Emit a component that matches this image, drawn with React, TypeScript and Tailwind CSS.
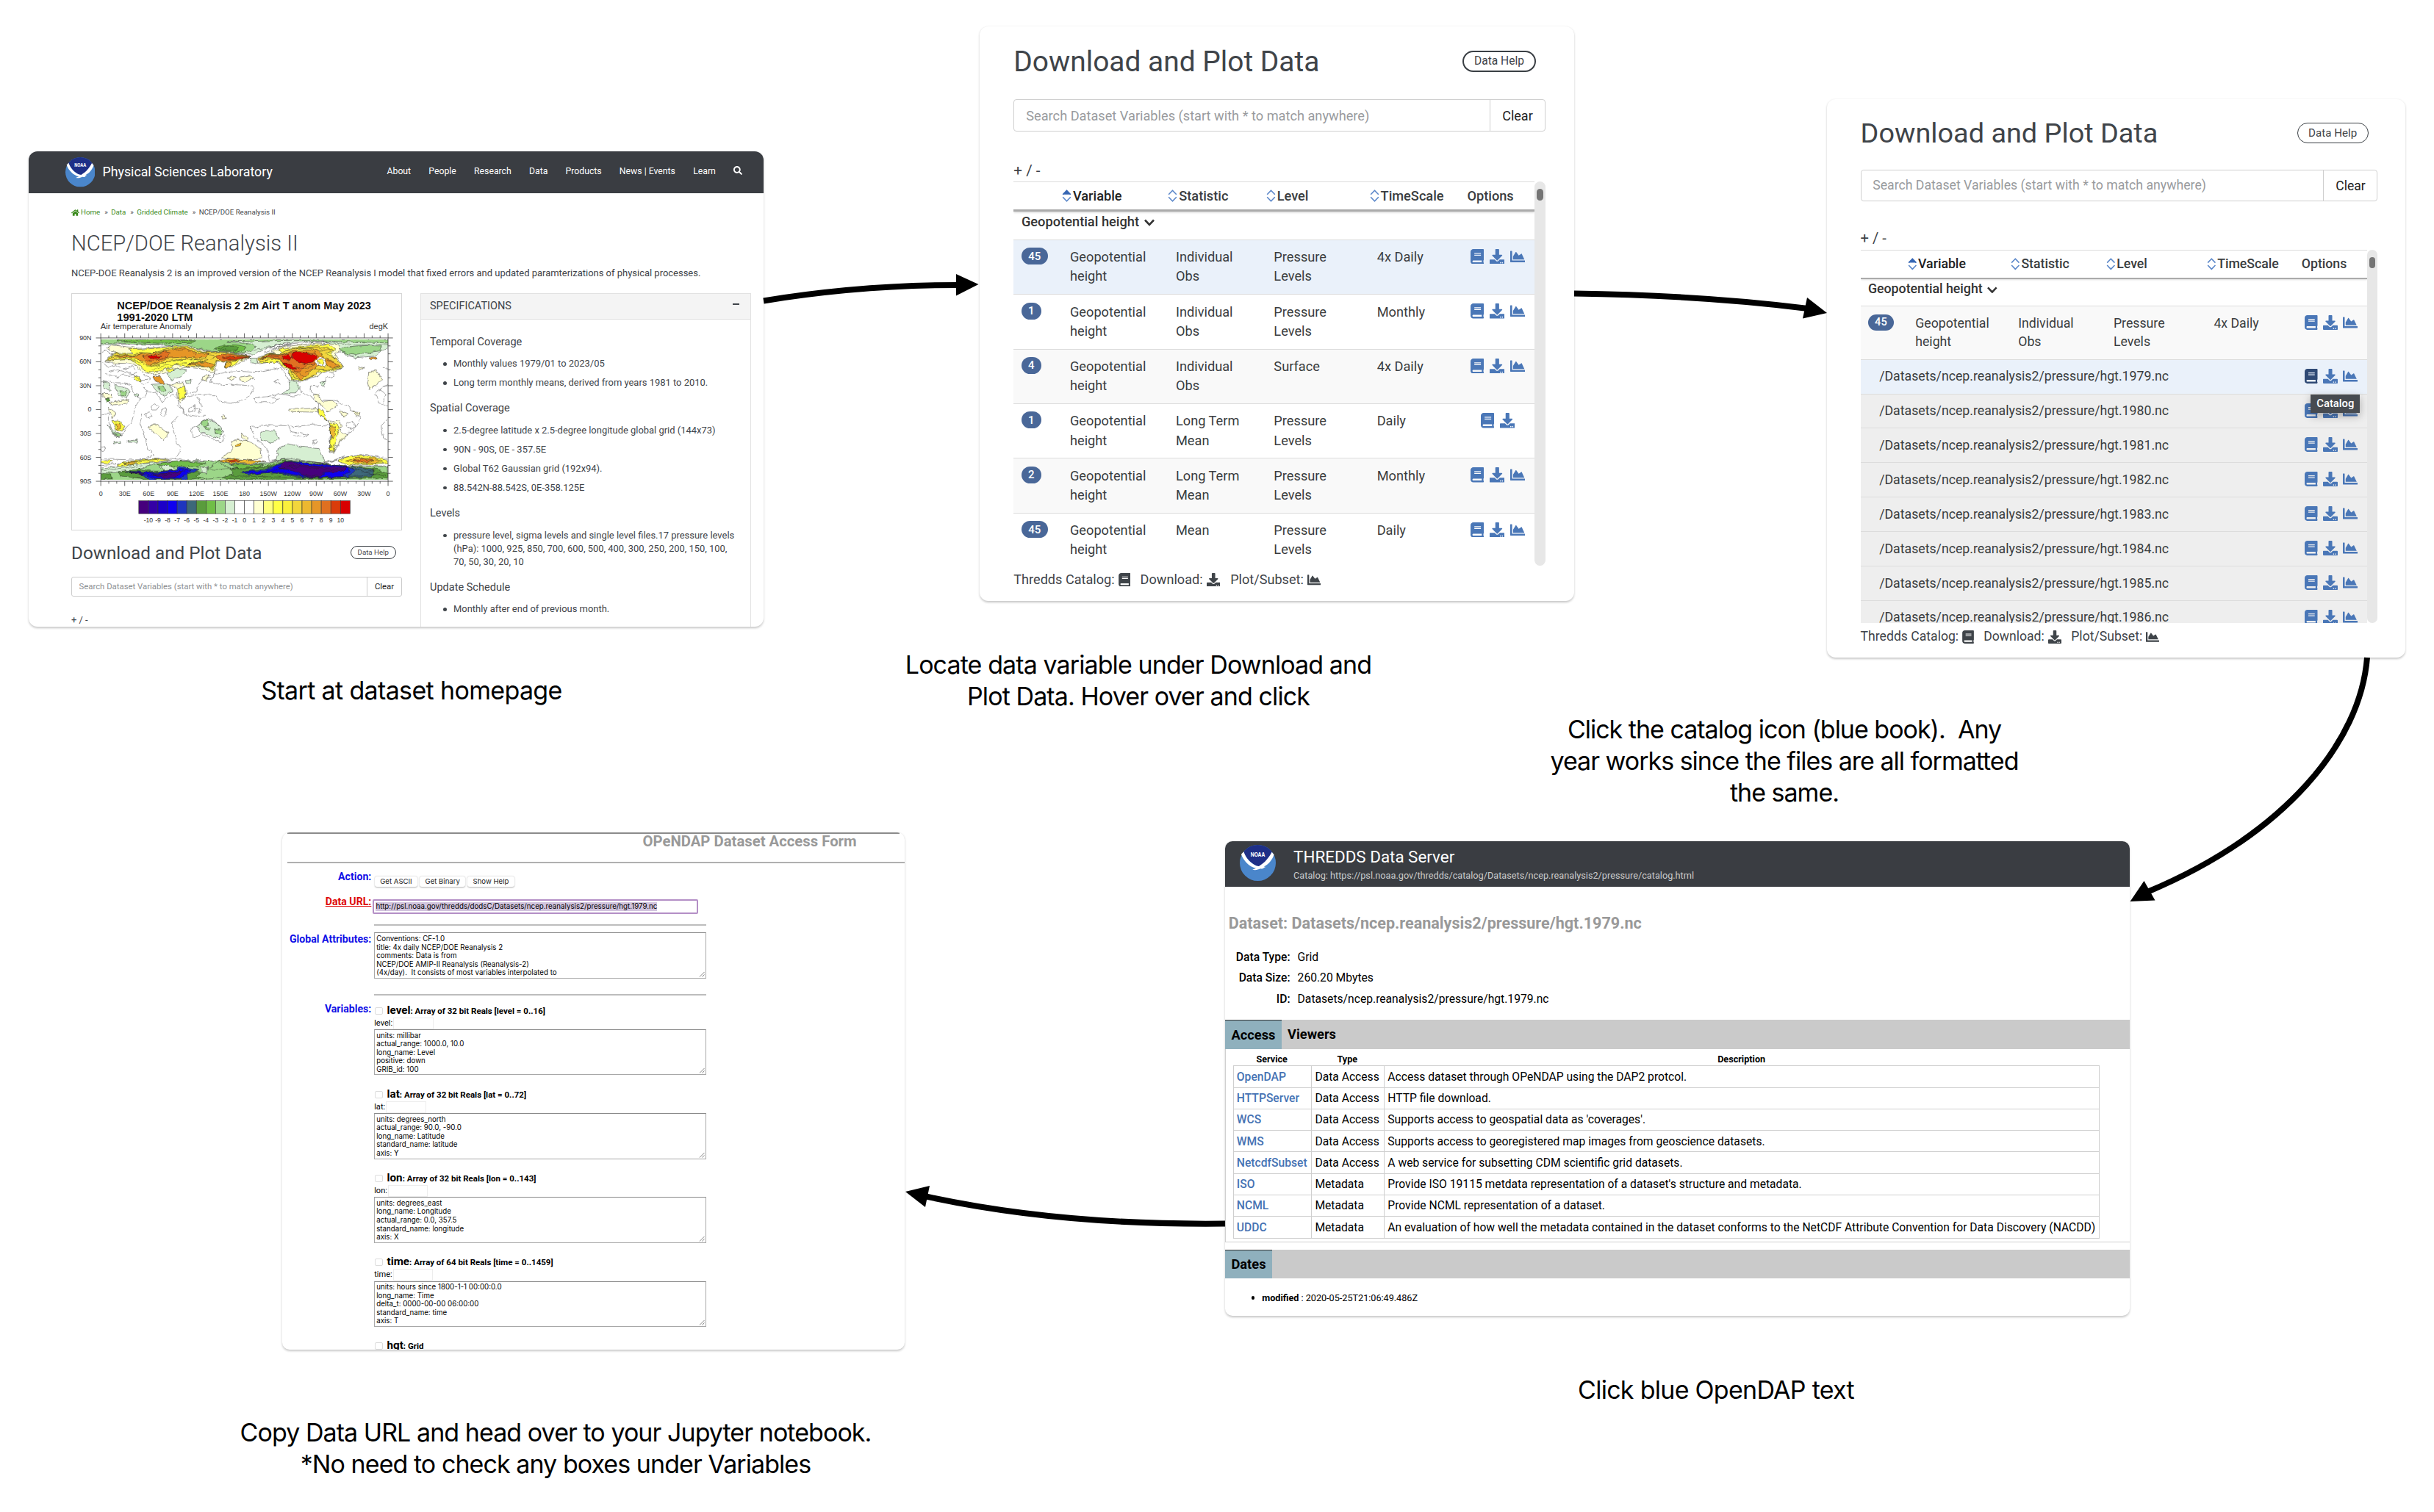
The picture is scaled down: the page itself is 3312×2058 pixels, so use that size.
import React from "react";
import { FaBook, FaDownload, FaChartArea, FaHome, FaSearch } from "react-icons/fa";

const CARD = "overflow-hidden bg-white shadow-[0_1.5px_3px_rgba(0,0,0,0.22)] font-['Roboto',sans-serif]";

function NoaaLogo({ className }: { className: string }) {
  return (
    <svg viewBox="0 0 100 100" className={className}>
      <defs>
        <clipPath id="disc">
          <circle cx="50" cy="50" r="50" />
        </clipPath>
      </defs>
      <g clipPath="url(#disc)">
        <rect width="100" height="100" fill="#4a86cb" />
        <path d="M-5 -5H105V22L90 22C82 40 68 55 52 60C36 55 20 40 10 22L-5 22Z" fill="#1e2f87" />
      </g>
      <path
        d="M4 26L11 19C17 37 30 52 46 58L53 59C70 50 80 36 89 20L95 27C90 42 80 54 67 60L72 61L66 64C68 66 62 67 57 66C51 69 44 71 35 69L45 65C26 61 10 43 4 26Z"
        fill="#ffffff"
      />
      <text x="50" y="32" textAnchor="middle" fontSize="16" fontWeight="700" textLength="40" lengthAdjust="spacingAndGlyphs" fill="#ffffff" fontFamily="Inter, sans-serif">
        NOAA
      </text>
    </svg>
  );
}

const SCALE_COLORS = [
  "#46007d", "#3400a6", "#1c00c8", "#0f00f0", "#1f35c0", "#3d687a", "#5a9c3c", "#70be46", "#9cd688", "#d6efd2", "#ffffff",
  "#ffffff", "#ffffd2", "#ffff80", "#ffff46", "#faf03c", "#f2d63c", "#ecb830", "#e69628", "#e07020", "#da3c0a", "#d80000",
];
const LAT = ["90N", "60N", "30N", "0", "30S", "60S", "90S"];
const LON = ["0", "30E", "60E", "90E", "120E", "150E", "180", "150W", "120W", "90W", "60W", "30W", "0"];

// Filled temperature bands, from bottom layer to top: [colour, outline]
const BANDS: [string, string][] = [
  // Arctic
  ["#d6efd2", "M169 214H1349V250L1322 262L1290 284L1216 290L1180 280L1140 248L1100 226L960 226L880 240L830 262L800 276L760 274L600 262L560 246L420 238L300 234L169 236Z"],
  ["#9cd688", "M169 214H1349V230L1180 224L950 219L860 221C800 226 690 220 690 224L790 234C822 250 780 270 740 270L625 264C590 250 480 244 420 237L300 232L169 229Z"],
  ["#70be46", "M235 215L430 216L560 221L540 228L400 231L300 225L235 221Z"],
  ["#70be46", "M632 254C670 234 730 232 765 246C756 268 705 272 682 265Z"],
  ["#5a9c3c", "M655 252C690 238 715 241 735 249C722 264 695 266 680 261Z"],
  ["#9cd688", "M1150 254Q1200 236 1322 242L1318 262Q1280 266 1262 272L1216 280Q1180 276 1154 264Z"],
  // Eurasia
  ["#ffffd2", "M186 308C196 286 210 276 232 270L196 250L212 238L250 242L330 252L420 246L520 238L600 264L700 266L786 286L760 302L700 332L680 328L690 304L645 308L636 350L620 352L596 336L520 330L465 340L430 352L400 360L350 352L330 340L318 324L300 315L215 312Z"],
  ["#ffff46", "M190 304C202 286 218 278 236 272L300 272L286 256L330 256L420 250L520 242L590 267L690 268L784 286L745 300L704 324L682 328L690 303L642 307L628 344L604 326L520 324L470 318L450 330L400 350L350 346L330 322L290 298L215 302Z"],
  ["#f2d63c", "M194 302L234 274L296 278L330 268L380 272L440 256L520 246L584 268L690 270L782 286L730 300L700 310L640 304L626 336L600 320L560 326L522 324L530 314L590 306L560 298L500 298L460 302L420 312L370 326L340 320L330 300L300 290L240 292L205 306Z"],
  ["#e69628", "M225 286L270 280L300 284L330 276L400 270L450 260L510 250L566 270L610 274L600 290L545 290L500 288L440 292L400 312L366 322L345 306L300 292Z"],
  ["#e07020", "M340 284L405 276L425 264L454 270L444 288L410 296L384 304L356 300Z"],
  ["#d80000", "M362 290L376 280L402 284L420 284L400 293L376 294Z"],
  ["#e07020", "M640 284L690 274L782 287L735 300L680 304L652 298Z"],
  ["#da3c0a", "M668 288L720 286L770 288L730 297L690 298Z"],
  ["#e69628", "M524 316L600 308L634 318L620 334L590 322Z"],
  ["#ecb830", "M684 310L704 306L700 330L682 330Z"],
  ["#d6efd2", "M784 292L812 292L812 318L790 310Z"],
  // North America
  ["#ffffd2", "M808 294L850 272L890 276L870 262L930 244L1060 230L1145 236L1150 262L1130 272L1140 290L1168 330L1120 350L1080 346L1062 364L1030 374L1000 388L952 384L940 348L905 318L880 306L815 316Z"],
  ["#ffff46", "M812 298L850 273L920 274L900 258L1000 244L1100 234L1126 250L1130 262L1110 272L1138 296L1164 332L1120 342L1060 350L1040 366L998 386L950 378L942 340L900 310L822 310Z"],
  ["#f2d63c", "M814 296L850 275L900 276L950 254L1060 244L1100 250L1124 262L1092 272L1136 292L1162 328L1110 340L1070 338L1050 360L1000 384L960 372L944 336L905 302L880 296L820 306Z"],
  ["#e69628", "M822 296L866 276L915 276L960 262L1040 258L1080 270L1084 290L1060 300L1070 318L1040 340L1016 362L990 382L968 358L945 338L906 296L860 290Z"],
  ["#e69628", "M1092 292L1120 306L1150 326L1120 334L1098 322Z"],
  ["#e07020", "M830 288L866 278L905 280L945 270L1050 270L1066 290L1050 316L1010 324L990 346L965 344L945 330L920 312L900 294Z"],
  ["#d80000", "M958 272L985 264L1058 282L1040 308L1010 314L975 306L954 292Z"],
  ["#d80000", "M914 286L936 276L950 290L940 302L920 296ZM922 312L950 314L970 336L945 338Z"],
  ["#ffffff", "M1048 306L1070 284L1090 298L1096 316L1086 330L1066 322Z"],
  ["#ffff46", "M1058 304L1076 294L1086 312L1076 320Z"],
  // Mid latitudes and tropics
  ["#e69628", "M386 366L412 368L442 408L420 402L396 386Z"],
  ["#e69628", "M1272 288L1300 288L1304 296L1284 298Z"],
  ["#ffff46", "M304 362L326 366L332 386L306 382ZM440 336L466 332L470 344L450 350Z"],
  ["#d6efd2", "M376 400L440 396L466 424L430 448L400 430Z"],
  ["#9cd688", "M398 408L432 406L440 426L416 432Z"],
  ["#d6efd2", "M226 404L262 408L290 432L272 456L240 446ZM176 384L206 396L208 426L186 416Z"],
  ["#9cd688", "M244 426L276 428L270 448L252 446Z"],
  ["#d6efd2", "M440 356L490 334L522 340L500 368L460 382ZM516 384L540 382L538 396L520 396ZM306 436L320 440L322 456L308 450Z"],
  ["#ffffd2", "M450 404L505 390L520 430L500 476L484 460L480 416Z"],
  ["#ffff46", "M484 418L514 406L514 450L492 464Z"],
  ["#ffffd2", "M204 474L284 462L276 478L220 484ZM200 494L228 514L216 542L206 520ZM172 440L216 440L214 458L190 460Z"],
  ["#5a9c3c", "M190 458L206 458L206 470L192 470Z"],
  ["#ffffd2", "M738 370L780 362L798 376L762 388L740 382ZM688 374L708 366L722 374L704 384ZM1228 326L1250 332L1230 342ZM586 370L616 360L606 384L586 384Z"],
  ["#ffffd2", "M1270 350L1304 346L1324 380L1300 404L1270 418L1264 386Z"],
  ["#d6efd2", "M942 380L976 392L988 412L966 438L912 438L944 418Z"],
  ["#d6efd2", "M1066 392L1094 384L1084 408Z"],
  ["#ffffd2", "M940 502L1050 498L1066 508L1044 514L950 512Z"],
  ["#ffffd2", "M1040 444L1062 440L1080 470L1120 466L1142 484L1104 514L1080 488L1056 472Z"],
  ["#ffff46", "M1062 496L1082 504L1098 550L1084 540L1064 520Z"],
  ["#ffffd2", "M1104 552L1150 546L1156 596L1180 606L1140 650L1126 684L1104 678L1114 620L1108 570Z"],
  ["#ffff46", "M1106 560L1130 556L1148 580L1134 630L1128 676L1110 670L1116 610Z"],
  ["#ecb830", "M1114 570L1132 572L1136 592L1120 620L1112 600Z"],
  ["#ffffd2", "M1150 508L1186 520L1172 532L1154 524ZM1202 512L1234 516L1228 536L1210 520Z"],
  ["#ffff46", "M214 552L240 550L268 572L256 592L232 584Z"],
  ["#ecb830", "M226 560L242 560L252 580L238 582Z"],
  ["#d6efd2", "M198 566L214 582L256 606L242 618L220 604Z"],
  ["#9cd688", "M222 598L246 604L244 614L230 610Z"],
  ["#d6efd2", "M220 638L250 634L250 642L222 644ZM280 634L322 626L318 638L282 638Z"],
  ["#ffffd2", "M362 574L400 564L446 600L430 630L396 606Z"],
  ["#d6efd2", "M566 570L602 542L650 562L672 596L656 622L614 606L580 598Z"],
  ["#9cd688", "M580 556L606 544L616 566L590 572ZM634 580L662 588L664 606L642 602ZM596 574L620 578L612 590L598 586Z"],
  ["#d6efd2", "M826 600L850 586L886 594L902 620L868 642L828 630Z"],
  ["#ffffd2", "M704 640L732 622L746 632L780 634L826 664L830 700L790 712L700 704L664 700L710 670Z"],
  ["#ffffd2", "M746 600L774 622L768 634L752 620ZM664 532L680 528L682 540L668 542Z"],
  ["#ecb830", "M720 650L744 640L738 656L722 658Z"],
  ["#d6efd2", "M888 712L902 660L938 644L990 656L1066 664L1090 716L1060 724L940 718Z"],
  ["#ffff46", "M1104 660L1122 654L1130 672L1112 676Z"],
  // Antarctica
  ["#d6efd2", "M169 744L260 734L440 716L560 712L660 718L860 722L900 708L1080 722L1140 734L1349 735V796H169Z"],
  ["#9cd688", "M169 762L300 764L360 734L430 720L560 716L640 714L700 728L850 726L920 708L1060 722L1110 730L1240 738L1349 738V796H169Z"],
  ["#5a9c3c", "M240 758L330 748L380 756L450 756L520 744L600 766L700 746L760 736L840 738L920 714L1120 732L1240 742L1310 748L1349 770V784L1000 790L700 788L640 782L520 794L360 790L250 776Z"],
  ["#70be46", "M400 726L480 714L600 722L560 738L440 736ZM700 730L840 730L800 744L740 744Z"],
  ["#9cd688", "M560 776L600 750L650 720L700 744L716 770L660 784L600 790Z"],
  ["#d6efd2", "M410 738L450 730L480 750L430 754ZM580 740L610 738L604 764L586 758Z"],
  ["#5a9c3c", "M169 766L210 768L214 788L169 792Z"],
  ["#3d687a", "M850 744L940 714L1090 732L1200 738L1290 752L1284 780L1000 784L880 762Z"],
  ["#1f35c0", "M270 756L400 760L470 752L494 740L570 752L524 768L526 790L370 790L340 772Z"],
  ["#0f00f0", "M290 760L400 763L480 752L500 748L540 754L516 768L500 788L390 788L350 772Z"],
  ["#46007d", "M380 768L420 766L500 758L480 780L440 786L400 778ZM290 762L350 766L340 770Z"],
  ["#1f35c0", "M740 762L800 752L850 750L900 726L960 714L1060 728L1180 736L1220 752L1180 782L1010 782L920 766L840 764L780 774Z"],
  ["#0f00f0", "M756 762L800 756L850 756L904 728L960 716L1060 730L1180 736L1190 760L1160 780L1010 780L920 762L840 762L790 770Z"],
  ["#46007d", "M900 744L920 720L960 718L1010 732L1080 738L1182 738L1164 756L1090 764L1060 782L1010 778L970 758Z"],
  ["#ffff46", "M169 716L200 711L220 718L190 726L169 724Z"],
  ["#ffff46", "M236 732L270 718L380 706L456 710L380 720L310 728L250 738Z"],
  ["#ecb830", "M262 726L300 716L320 720L290 730ZM654 716L690 704L760 710L848 718L790 724L700 726Z"],
  ["#da3c0a", "M680 714L720 710L744 716L710 722Z"],
  ["#ffff46", "M1140 716L1176 698L1250 692L1349 712V722L1260 730L1190 730Z"],
  ["#ecb830", "M1176 714L1220 702L1290 704L1330 718L1260 724L1210 724Z"],
  ["#e07020", "M1204 714L1240 706L1290 712L1260 720Z"],
];

// Coastlines and unfilled contours
const LINES: string[] = [
  "M169 390L200 384L230 396L260 396L290 400L300 420L312 444L330 462L352 448L362 428L340 412",
  "M360 425L380 432L400 440L424 474L436 460L466 440L484 460L500 500L516 524L560 530L600 530",
  "M330 462L310 492L300 520L300 552L270 580L256 612L226 614L212 580L200 540L200 520L169 526",
  "M480 484L500 500L520 522M530 500L556 486L556 510L530 514ZM560 452L576 460L570 480L584 486M560 500L580 500L572 520",
  "M540 578L566 570M540 578L546 618L580 606L620 618L660 640L680 610L672 590L640 556L610 540L600 548",
  "M516 440L560 430L570 400L604 376L632 366L640 340",
  "M486 530L460 560L470 600L480 640L500 664L480 700M340 520L330 560L350 610L360 660L390 690L360 702",
  "M520 450L570 440L640 444L660 470L720 476L780 450L800 412L770 404L700 400L660 402L620 390L630 360L690 350L740 346L800 350L880 336L908 330L940 380",
  "M800 456L850 450L900 458L880 474L806 474ZM850 450L910 440L960 448L990 440M908 400L880 392L900 380",
  "M784 576L860 568L940 570L950 594L1020 606L1004 616L960 610M952 574L1040 566L1110 568M784 576L800 620L850 660L862 716",
  "M1030 406L1060 408L1074 400L1100 372L1130 366L1120 352M1030 406L1030 430L1060 444L1080 464L1130 466L1180 486L1200 510L1236 526L1230 560L1190 600L1160 620L1130 680L1108 676L1112 600L1104 556L1060 516L1064 480L1044 462L990 424L952 370",
  "M1350 540L1320 570L1330 620L1350 630M1349 400L1322 410L1296 440L1310 476L1349 486M1310 416L1340 440L1330 470M1330 330L1349 340",
  "M376 490L390 480L408 490L400 502L382 502ZM350 524L366 516L380 530L360 538ZM412 512L430 498L440 504L430 530L416 526Z",
  "M1040 630L1056 628L1064 638L1052 646L1040 640ZM1176 560L1200 552L1216 572L1196 582L1180 574Z",
  "M169 656L184 658L188 668L178 676L169 672Z",
  "M169 270L190 262L220 276L200 290M240 350L260 336L300 326L310 340M200 350L240 340L300 356L330 380L360 380M190 356L240 372L260 360L300 372M176 310L200 330L230 320L250 330M270 340L290 360L320 350M340 360L370 372L366 390L340 400L320 380",
  "M900 250L960 232L1040 224L1140 228L1220 238L1349 236M800 260L880 240L940 226M860 254L950 234M840 268L900 246L960 228",
  "M169 706L300 710L460 704L520 712M169 734L240 726L400 708M169 752L260 744L340 734M860 716L940 704L1080 724L1160 700L1260 688L1349 706M1080 732L1140 708M1060 728L1130 714L1170 694",
  "M460 770L380 776L330 764M860 760L940 738L1040 744L1160 750M900 750L960 730L1080 742M980 770L1060 776",
  "M300 760L420 768L520 754M560 740L640 750L720 744L860 740M700 776L820 778L1000 784L1240 776L1330 760M1200 744L1260 760L1300 752M1240 760L1340 776",
  "M200 300L240 280L300 284L340 276M240 296L300 300L330 312M360 330L400 322L440 308L500 300M380 340L430 324L520 310M480 262L520 256L560 276M600 276L640 282L620 300M540 300L600 296L610 302L560 308",
  "M820 300L860 284L900 286L940 306M950 350L980 352L1010 366M970 330L1010 336L1040 326M1000 256L1060 250L1090 260M1060 262L1110 256M930 262L980 252L1040 248M1100 300L1130 316L1140 330M1010 350L1050 336L1100 340",
];

function AnomalyMap() {
  const x0 = 169, x1 = 1349, y0 = 209, y1 = 798;
  return (
    <svg viewBox="52 28 1350 969" className="h-[323px] w-[450px] shrink-0 border border-[#d6d6d6] bg-white" fontFamily="'Liberation Sans', Arial, sans-serif">
      <defs>
        <clipPath id="plot">
          <rect x={x0} y={y0 + 6} width={x1 - x0} height={y1 - y0 - 12} />
        </clipPath>
        <filter id="contour" filterUnits="userSpaceOnUse" x="150" y="190" width="1220" height="620">
          <feTurbulence type="fractalNoise" baseFrequency="0.045" numOctaves="3" seed="4" />
          <feDisplacementMap in="SourceGraphic" scale="16" xChannelSelector="R" yChannelSelector="G" />
        </filter>
      </defs>
      <g fill="#111">
        <text x="236" y="91" fontSize="43" fontWeight="700" textLength="1043" lengthAdjust="spacingAndGlyphs">NCEP/DOE Reanalysis 2 2m Airt T anom May 2023</text>
        <text x="236" y="140" fontSize="43" fontWeight="700" textLength="311" lengthAdjust="spacingAndGlyphs">1991-2020 LTM</text>
      </g>
      <g fill="#333" fontSize="33">
        <text x="168" y="172" textLength="374" lengthAdjust="spacingAndGlyphs">Air temperature Anomaly</text>
        <text x="1349" y="172" textAnchor="end">degK</text>
      </g>
      <g clipPath="url(#plot)">
        <g filter="url(#contour)" strokeLinejoin="round">
          {BANDS.map(([fill, d], i) => (
            <path key={i} d={d} fill={fill} stroke="#222" strokeOpacity="0.75" strokeWidth="1.9" />
          ))}
          {LINES.map((d, i) => (
            <path key={i} d={d} fill="none" stroke="#222" strokeOpacity="0.65" strokeWidth="1.9" />
          ))}
        </g>
      </g>
      <g stroke="#444" strokeWidth="2.5" fill="none">
        <rect x={x0} y={y0} width={x1 - x0} height={y1 - y0} />
        {Array.from({ length: 37 }, (_, i) => {
          const x = x0 + (i * (x1 - x0)) / 36;
          const l = i % 3 === 0 ? 19 : 10;
          return <path key={i} d={`M${x} ${y0}v${-l}M${x} ${y1}v${l}`} />;
        })}
        {Array.from({ length: 19 }, (_, i) => {
          const y = y0 + (i * (y1 - y0)) / 18;
          const l = i % 3 === 0 ? 20 : 10;
          return <path key={i} d={`M${x0} ${y}h${-l}M${x1} ${y}h${l}`} />;
        })}
      </g>
      <g fill="#333" fontSize="27">
        {LAT.map((t, i) => (
          <text key={t} x="131" y={y0 + (i * (y1 - y0)) / 6 + 9} textAnchor="end">{t}</text>
        ))}
        {LON.map((t, i) => (
          <text key={i} x={x0 + (i * (x1 - x0)) / 12} y="858" textAnchor="middle">{t}</text>
        ))}
      </g>
      {SCALE_COLORS.map((c, i) => (
        <rect key={i} x={325 + i * 39.45} y="878" width="39.45" height="53" fill={c} stroke="#333" strokeWidth="1.8" />
      ))}
      <g fill="#333" fontSize="26">
        {Array.from({ length: 21 }, (_, i) => (
          <text key={i} x={364.5 + i * 39.45} y="966" textAnchor="middle">{i - 10}</text>
        ))}
      </g>
    </svg>
  );
}

const SPECS: { title: string; items: string[][] }[] = [
  { title: "Temporal Coverage", items: [["Monthly values 1979/01 to 2023/05"], ["Long term monthly means, derived from years 1981 to 2010."]] },
  {
    title: "Spatial Coverage",
    items: [["2.5-degree latitude x 2.5-degree longitude global grid (144x73)"], ["90N - 90S, 0E - 357.5E"], ["Global T62 Gaussian grid (192x94)."], ["88.542N-88.542S, 0E-358.125E"]],
  },
  {
    title: "Levels",
    items: [["pressure level, sigma levels and single level files.17 pressure levels", "(hPa): 1000, 925, 850, 700, 600, 500, 400, 300, 250, 200, 150, 100,", "70, 50, 30, 20, 10"]],
  },
  { title: "Update Schedule", items: [["Monthly after end of previous month."]] },
];

function HomepageCard() {
  return (
    <section className={`${CARD} absolute left-[39px] top-[206px] h-[646.5px] w-[1000px] rounded-[12px] text-[#3f4449]`}>
      <header className="flex h-[57px] items-center bg-[#3a3d42] pl-[49.5px] pr-[29px] text-white">
        <NoaaLogo className="size-[40.5px]" />
        <span className="ml-[10.5px] whitespace-nowrap text-[17.78px]">Physical Sciences Laboratory</span>
        <nav className="ml-auto flex items-center gap-[24.2px] whitespace-nowrap pb-[2px] text-[12.25px]">
          {["About", "People", "Research", "Data", "Products", "News | Events", "Learn"].map((t) => (
            <span key={t}>{t}</span>
          ))}
          <FaSearch className="mb-[3px] size-[12px]" />
        </nav>
      </header>
      <div className="pl-[58px] pr-[17px]">
        <div className="mt-[19.4px] flex h-[14px] items-center whitespace-nowrap text-[9.71px] text-[#3b8a1d]">
          <FaHome className="mr-[2px] size-[11px]" />
          <span>Home</span>
          <span className="ml-[6px] mr-[4.5px] text-[#3f4449]">»</span>
          <span>Data</span>
          <span className="ml-[6px] mr-[4.5px] text-[#3f4449]">»</span>
          <span>Gridded Climate</span>
          <span className="ml-[6px] mr-[4.5px] text-[#3f4449]">»</span>
          <span className="text-[#3f4449]">NCEP/DOE Reanalysis II</span>
        </div>
        <h1 className="mt-[16.4px] text-[29.2px] font-light leading-[36px]">NCEP/DOE Reanalysis II</h1>
        <p className="mt-[13.8px] whitespace-nowrap text-[12.97px] leading-[18px]">
          NCEP-DOE Reanalysis 2 is an improved version of the NCEP Reanalysis I model that fixed errors and updated paramterizations of physical processes.
        </p>
        <div className="mt-[18.7px] flex gap-[25px]">
          <div className="flex w-[450px] flex-col">
            <AnomalyMap />
            <div className="mt-[16.2px] flex h-[30px] items-center justify-between pr-[8px]">
              <h2 className="whitespace-nowrap text-[24.25px]">Download and Plot Data</h2>
              <span className="mb-[3px] flex h-[18px] w-[62.5px] items-center justify-center rounded-full border-[1.5px] border-[#3a3f44] text-[9.73px]">Data Help</span>
            </div>
            <div className="mt-[16.5px] flex h-[27px] rounded-[3px] border border-[#ccc]">
              <span className="flex flex-1 items-center pl-[9.5px] text-[11.35px] text-[#8e9194]">Search Dataset Variables (start with * to match anywhere)</span>
              <span className="flex w-[47px] items-center justify-center border-l border-[#ccc] text-[11.35px] text-[#222]">Clear</span>
            </div>
            <div className="mt-[24.5px] text-[12.96px] leading-[16px]">+ / -</div>
          </div>
          <div className="h-[470px] w-[450px] border border-[#e2e2e2]">
            <div className="flex h-[35px] items-center justify-between border-b border-[#e0e0e0] bg-[#f4f4f4] pl-[12px] pr-[15px] text-[14.52px]">
              <span>SPECIFICATIONS</span>
              <span className="mb-[6px] h-[2px] w-[9px] bg-[#3f4449]" />
            </div>
            <div className="flex flex-col gap-[16px] pl-[12px] pt-[20.5px]">
              {SPECS.map((s) => (
                <div key={s.title}>
                  <h3 className="text-[14.54px] leading-[20px]">{s.title}</h3>
                  <ul className="mt-[10.6px] flex flex-col gap-[8px] text-[12.95px] leading-[18px]">
                    {s.items.map((lines) => (
                      <li key={lines[0]} className="flex pl-[18px]">
                        <span className="mr-[9.5px] mt-[7px] size-[4.5px] shrink-0 rounded-full bg-[#3f4449]" />
                        <span className="whitespace-nowrap">
                          {lines.map((l) => (
                            <span key={l} className="block">{l}</span>
                          ))}
                        </span>
                      </li>
                    ))}
                  </ul>
                </div>
              ))}
            </div>
          </div>
        </div>
      </div>
    </section>
  );
}

function SortIcon({ active }: { active?: boolean }) {
  return (
    <svg viewBox="0 0 13 17" className="mr-[2px] h-[17px] w-[13px] shrink-0" fill="none" stroke="#5b87c9" strokeWidth="1.6" strokeLinejoin="round">
      <path d="M1.2 6.8L6.5 1.2L11.8 6.8" fill={active ? "#3767b4" : "none"} stroke={active ? "#3767b4" : "#5b87c9"} />
      <path d="M1.2 10.2L6.5 15.8L11.8 10.2" />
    </svg>
  );
}

function RowIcons({ dark, chart = true }: { dark?: boolean; chart?: boolean }) {
  return (
    <span className="flex w-[100px] justify-center gap-[7.5px] text-[#4a77b7]">
      <FaBook className={dark ? "h-[20.6px] w-[18px] text-[#2f4a75]" : "h-[20.6px] w-[18px]"} />
      <FaDownload className="size-[20.6px]" />
      {chart && <FaChartArea className="size-[20.6px]" />}
    </span>
  );
}

type Row = { n: string; stat: string[]; level: string[]; time: string; tone: string; chart?: boolean };

function VariableRow({ row }: { row: Row }) {
  return (
    <div className={`flex h-[74.4px] shrink-0 border-b-[1.5px] border-[#dcdcdc] pl-[10.6px] pt-[10.5px] text-[18.22px] leading-[26.2px] text-[#3a3d40] ${row.tone}`}>
      <span className="w-[66.1px]">
        <span className={`flex h-[23px] items-center justify-center rounded-full bg-[#496798] text-[15px] font-medium text-white ${row.n.length > 1 ? "w-[36px]" : "w-[27px]"}`}>{row.n}</span>
      </span>
      <span className="w-[144px]">Geopotential<br />height</span>
      <span className="w-[133.4px]">{row.stat[0]}<br />{row.stat[1]}</span>
      <span className="w-[140.3px]">{row.level[0]}<br />{row.level[1]}</span>
      <span className="w-[114.5px]">{row.time}</span>
      <span className="pt-[1.5px]"><RowIcons chart={row.chart !== false} /></span>
    </div>
  );
}

function DataPanel({ className, children }: { className: string; children: React.ReactNode }) {
  return (
    <section className={`${CARD} h-[781.7px] w-[809.3px] rounded-[12px] pl-[46.6px] pr-[39px] pt-[27.5px] text-[#3f4449] ${className}`}>
      <div className="flex h-[44px] items-center justify-between pr-[13px]">
        <h2 className="mb-[2px] whitespace-nowrap text-[38.9px]">Download and Plot Data</h2>
        <span className="mb-[4px] flex h-[28.5px] w-[100px] items-center justify-center rounded-full border-[2px] border-[#3a3f44] text-[15.57px]">Data Help</span>
      </div>
      <div className="mt-[27.8px] flex h-[44px] rounded-[4px] border-[1.5px] border-[#cfcfcf]">
        <span className="flex flex-1 items-center whitespace-nowrap pl-[16px] text-[18.19px] text-[#999b9e]">Search Dataset Variables (start with * to match anywhere)</span>
        <span className="flex w-[75px] items-center justify-center border-l-[1.5px] border-[#cfcfcf] text-[18px] text-[#222]">Clear</span>
      </div>
      <div className="mt-[40.6px] text-[20.7px] leading-[24px]">+ / -</div>
      <div className="mt-[3.4px] flex h-[522.3px]">
        <div className="flex w-[709px] flex-col overflow-hidden">
          <div className="z-10 flex h-[41px] shrink-0 items-center whitespace-nowrap border-b-[3px] border-t-[1.5px] border-b-[#ababab] border-t-[#dcdcdc] bg-white pl-[65.7px] text-[18.2px] font-medium text-[#3a3d40] shadow-[0_1px_3px_rgba(0,0,0,0.2)]">
            <span className="flex w-[144.3px] items-center text-[#222]"><SortIcon active />Variable</span>
            <span className="flex w-[133.5px] items-center"><SortIcon />Statistic</span>
            <span className="flex w-[140.8px] items-center"><SortIcon />Level</span>
            <span className="flex w-[132.9px] items-center"><SortIcon />TimeScale</span>
            <span>Options</span>
          </div>
          <div className="flex h-[38.5px] shrink-0 items-start border-b-[1.5px] border-[#dcdcdc] pl-[10.6px] pt-[1px] text-[18.28px] font-medium leading-[26px] text-[#333]">
            Geopotential height
            <svg viewBox="0 0 14 10" className="ml-[6.5px] mt-[9px] h-[10px] w-[14px]" fill="none" stroke="#333" strokeWidth="2.6">
              <path d="M1 1.5L7 7.8L13 1.5" />
            </svg>
          </div>
          {children}
        </div>
        <div className="w-[14.5px] rounded-full bg-[#e7e7e7] pl-[2.5px] pt-[10px]">
          <div className="h-[16px] w-[9px] rounded-full bg-[#757575]" />
        </div>
      </div>
      <div className="mt-[7.5px] flex items-center whitespace-nowrap text-[18.12px] leading-[24px]">
        Thredds Catalog:<FaBook className="ml-[5px] h-[18.5px] w-[16.5px]" />
        <span className="ml-[13.5px]">Download:</span><FaDownload className="ml-[5px] size-[18.5px]" />
        <span className="ml-[14px]">Plot/Subset:</span><FaChartArea className="ml-[5px] size-[18.5px]" />
      </div>
    </section>
  );
}

const ROWS: Row[] = [
  { n: "45", stat: ["Individual", "Obs"], level: ["Pressure", "Levels"], time: "4x Daily", tone: "bg-[#eaf1fa]" },
  { n: "1", stat: ["Individual", "Obs"], level: ["Pressure", "Levels"], time: "Monthly", tone: "bg-white" },
  { n: "4", stat: ["Individual", "Obs"], level: ["Surface", ""], time: "4x Daily", tone: "bg-[#f9f9f9]" },
  { n: "1", stat: ["Long Term", "Mean"], level: ["Pressure", "Levels"], time: "Daily", tone: "bg-white", chart: false },
  { n: "2", stat: ["Long Term", "Mean"], level: ["Pressure", "Levels"], time: "Monthly", tone: "bg-[#f9f9f9]" },
  { n: "45", stat: ["Mean", ""], level: ["Pressure", "Levels"], time: "Daily", tone: "bg-white" },
];

function FileRow({ year }: { year: number }) {
  const hovered = year === 1979;
  return (
    <div className={`flex h-[48.2px] shrink-0 items-center border-b-[1.5px] border-[#dcdcdc] pl-[26.3px] text-[18.22px] text-[#3a3d40] ${hovered ? "bg-[#eaf1fa]" : "bg-[#eeeeee]"}`}>
      <span className="w-[582.6px]">/Datasets/ncep.reanalysis2/pressure/hgt.{year}.nc</span>
      <span className="pb-[2px]"><RowIcons dark={hovered} /></span>
    </div>
  );
}

const LABEL = "w-[121.3px] shrink-0 text-right text-[14.11px] font-bold leading-[18px] text-[#1010e6]";

function TextBox({ lines }: { lines: string[] }) {
  return (
    <div className="relative h-[62.4px] w-[452.3px] border border-t-[1.5px] border-[#a8a8a8] border-t-[#888] pl-[2px] pt-[1.5px] font-['Inter',sans-serif] text-[9.74px] leading-[11.57px] text-black">
      {lines.map((l) => (
        <div key={l} className="whitespace-pre">{l}</div>
      ))}
      <svg viewBox="0 0 8 8" className="absolute bottom-[1px] right-[1px] size-[8px]" stroke="#777" strokeWidth="0.9">
        <path d="M1 7.5L7.5 1M4.5 7.5L7.5 4.5" />
      </svg>
    </div>
  );
}

const VARS = [
  { name: "level", desc: ": Array of 32 bit Reals [level = 0..16]", lines: ["units: millibar", "actual_range: 1000.0, 10.0", "long_name: Level", "positive: down", "GRIB_id: 100"] },
  { name: "lat", desc: ": Array of 32 bit Reals [lat = 0..72]", lines: ["units: degrees_north", "actual_range: 90.0, -90.0", "long_name: Latitude", "standard_name: latitude", "axis: Y"] },
  { name: "lon", desc: ": Array of 32 bit Reals [lon = 0..143]", lines: ["units: degrees_east", "long_name: Longitude", "actual_range: 0.0, 357.5", "standard_name: longitude", "axis: X"] },
  { name: "time", desc: ": Array of 64 bit Reals [time = 0..1459]", lines: ["units: hours since 1800-1-1 00:00:0.0", "long_name: Time", "delta_t: 0000-00-00 06:00:00", "standard_name: time", "axis: T"] },
];

function VarHeading({ name, desc }: { name: string; desc: string }) {
  return (
    <div className="flex h-[18px] items-baseline whitespace-nowrap font-bold leading-[18px] text-black">
      <span className="ml-[1.3px] mr-[5px] h-[10px] w-[11px] translate-y-[1px] rounded-[2px] border border-[#dcdcdc]" />
      <span className="text-[15.22px]">{name}</span>
      <span className="text-[11.5px]">{desc}</span>
    </div>
  );
}

function AccessFormCard() {
  return (
    <section className={`${CARD} absolute left-[384px] top-[1133px] h-[704px] w-[847px] rounded-[10px]`}>
      <div className="mx-[6.8px] h-[2px] bg-[#8c8c8c]" />
      <h2 className="-mt-[2px] whitespace-nowrap pl-[490.5px] text-[20.31px] font-bold leading-[24px] text-[#999]">OPeNDAP Dataset Access Form</h2>
      <div className="ml-[6.8px] mt-[16px] h-[2px] bg-[#b0b0b0]" />
      <div className="mt-[9px] flex">
        <span className={LABEL}>Action:</span>
        <span className="ml-[4.4px] mt-[8.7px] flex gap-[3px] whitespace-nowrap font-['Inter',sans-serif] text-[9.6px] text-[#222]">
          <span className="flex h-[14.5px] w-[58.5px] items-center justify-center rounded-[3px] bg-white shadow-[0_0.5px_2px_rgba(0,0,0,0.3)]">Get ASCII</span>
          <span className="flex h-[14.5px] w-[62px] items-center justify-center rounded-[3px] bg-white shadow-[0_0.5px_2px_rgba(0,0,0,0.3)]">Get Binary</span>
          <span className="flex h-[14.5px] w-[63.5px] items-center justify-center rounded-[3px] bg-white shadow-[0_0.5px_2px_rgba(0,0,0,0.3)]">Show Help</span>
        </span>
      </div>
      <div className="mt-[10.8px] flex">
        <span className="w-[121.3px] shrink-0 text-right text-[14.11px] font-bold leading-[18px] text-[#dd0a0a] underline">Data URL:</span>
        <span className="ml-[2.2px] mt-[5.8px] flex h-[20.7px] w-[442.3px] items-center rounded-[2px] border-[2.5px] border-[#b48fc6] pl-[2px]">
          <span className="bg-[#d2c4de] font-['Inter',sans-serif] text-[9.74px] leading-[11.6px] text-black">http://psl.noaa.gov/thredds/dodsC/Datasets/ncep.reanalysis2/pressure/hgt.1979.nc</span>
        </span>
      </div>
      <div className="ml-[125.2px] mt-[14px] h-[2px] w-[452.3px] bg-[#bdbdbd]" />
      <div className="mt-[9px] flex gap-[3.9px]">
        <span className={LABEL}>Global Attributes:</span>
        <TextBox lines={["Conventions: CF-1.0", "title: 4x daily NCEP/DOE Reanalysis 2", "comments: Data is from", "NCEP/DOE AMIP-II Reanalysis (Reanalysis-2)", "(4x/day).  It consists of most variables interpolated to"]} />
      </div>
      <div className="ml-[125.2px] mt-[21px] h-[2px] w-[452.3px] bg-[#bdbdbd]" />
      <div className="mt-[9.4px] flex gap-[3.9px]">
        <span className={LABEL}>Variables:</span>
        <div className="pt-[1.3px]">
          {VARS.map((v) => (
            <div key={v.name} className="mb-[16.3px]">
              <VarHeading name={v.name} desc={v.desc} />
              <div className="mt-[1px] flex h-[16.5px] items-center text-[11.06px] leading-[14px] text-black">
                {v.name}:<span className="ml-[1px] h-[16px] w-[54.5px] border border-[#ededed]" />
              </div>
              <TextBox lines={v.lines} />
            </div>
          ))}
          <VarHeading name="hgt" desc=": Grid" />
        </div>
      </div>
    </section>
  );
}

const SERVICES = [
  ["OpenDAP", "Data Access", "Access dataset through OPeNDAP using the DAP2 protcol."],
  ["HTTPServer", "Data Access", "HTTP file download."],
  ["WCS", "Data Access", "Supports access to geospatial data as 'coverages'."],
  ["WMS", "Data Access", "Supports access to georegistered map images from geoscience datasets."],
  ["NetcdfSubset", "Data Access", "A web service for subsetting CDM scientific grid datasets."],
  ["ISO", "Metadata", "Provide ISO 19115 metdata representation of a dataset's structure and metadata."],
  ["NCML", "Metadata", "Provide NCML representation of a dataset."],
  ["UDDC", "Metadata", "An evaluation of how well the metadata contained in the dataset conforms to the NetCDF Attribute Convention for Data Discovery (NACDD)"],
];

function ThreddsCard() {
  return (
    <section className={`${CARD} absolute left-[1667px] top-[1145px] h-[645.5px] w-[1231px] rounded-[10px] text-black`}>
      <header className="flex h-[61.6px] items-start bg-[#3a3d42] pl-[19.5px] pt-[5px]">
        <NoaaLogo className="size-[49px]" />
        <div className="ml-[24.6px] mt-[3px] whitespace-nowrap">
          <div className="text-[22.4px] leading-[26px] text-white">THREDDS Data Server</div>
          <div className="mt-[4.7px] text-[12.71px] leading-[16px] text-[#cbcbcb]">Catalog: https://psl.noaa.gov/thredds/catalog/Datasets/ncep.reanalysis2/pressure/catalog.html</div>
        </div>
      </header>
      <h2 className="mt-[37px] pl-[4.7px] text-[21.57px] font-bold leading-[26px] text-[#999]">Dataset: Datasets/ncep.reanalysis2/pressure/hgt.1979.nc</h2>
      <dl className="mt-[19.4px] text-[15.66px] leading-[28.4px]">
        {[["Data Type:", "Grid"], ["Data Size:", "260.20 Mbytes"], ["ID:", "Datasets/ncep.reanalysis2/pressure/hgt.1979.nc"]].map(([k, v]) => (
          <div key={k} className="flex gap-[10px]">
            <dt className="w-[88.6px] text-right font-medium">{k}</dt>
            <dd>{v}</dd>
          </div>
        ))}
      </dl>
      <div className="mt-[13.6px] flex h-[39.8px] bg-[#cacaca] text-[18.27px] font-bold">
        <span className="flex w-[77px] items-center justify-center border-t-[1.5px] border-[#333] bg-[#8fb0bd]">Access</span>
        <span className="flex items-center pl-[8px]">Viewers</span>
      </div>
      <div className="h-[263px] border-b-[1.5px] border-l-[1.5px] border-[#cfcfcf] pl-[9.5px]">
        <div className="flex h-[22.7px] w-[1179px] items-end pb-[1.5px] text-center text-[12.63px] font-bold leading-[15px]">
          <span className="w-[106.4px]">Service</span>
          <span className="w-[98.9px]">Type</span>
          <span className="flex-1">Description</span>
        </div>
        <div className="w-[1179px] border-l-[1.5px] border-t-[1.5px] border-[#cfcfcf] text-[15.66px]">
          {SERVICES.map(([s, t, d]) => (
            <div key={s} className="flex h-[29.3px]">
              <span className="flex w-[106.4px] items-center border-b-[1.5px] border-r-[1.5px] border-[#cfcfcf] pl-[4.3px] font-medium text-[#4673b4]">{s}</span>
              <span className="flex w-[98.9px] items-center border-b-[1.5px] border-r-[1.5px] border-[#cfcfcf] pl-[4.5px]">{t}</span>
              <span className="flex flex-1 items-center whitespace-nowrap border-b-[1.5px] border-r-[1.5px] border-[#cfcfcf] pl-[4.5px]">{d}</span>
            </div>
          ))}
        </div>
      </div>
      <div className="mt-[10px] flex h-[39.8px] bg-[#cacaca] text-[18.27px] font-bold">
        <span className="flex w-[64px] items-center justify-center border-t-[1.5px] border-[#333] bg-[#8fb0bd]">Dates</span>
      </div>
      <div className="mt-[17.2px] flex items-center pl-[35.6px] text-[12.65px] leading-[18px]">
        <span className="mr-[10.2px] size-[4.5px] rounded-full bg-black" />
        <b className="mr-[3px]">modified</b>: 2020-05-25T21:06:49.486Z
      </div>
    </section>
  );
}

const CAPTION = "absolute text-center whitespace-pre font-['Inter',sans-serif] text-[34px] leading-[43px] text-black";

export default function App() {
  return (
    <main className="relative h-[2058px] w-[3312px] overflow-hidden bg-white">
      <HomepageCard />
      <DataPanel className="absolute left-[1332.7px] top-[36px]">
        {ROWS.map((r, i) => (
          <VariableRow key={i} row={r} />
        ))}
      </DataPanel>
      <div className="absolute left-[2486.3px] top-[134.7px]">
        <div className="[zoom:0.9725]">
          <DataPanel className="relative">
            <VariableRow row={{ ...ROWS[0], tone: "bg-[#f9f9f9]" }} />
            {Array.from({ length: 8 }, (_, i) => (
              <FileRow key={i} year={1979 + i} />
            ))}
            <span className="absolute left-[676.6px] top-[413.6px] z-20 flex h-[25.6px] w-[69px] items-center justify-center bg-[#474b50] text-[15.2px] font-medium text-white shadow-[0_4px_12px_rgba(0,0,0,0.3)]">Catalog</span>
          </DataPanel>
        </div>
      </div>
      <AccessFormCard />
      <ThreddsCard />

      <p className={`${CAPTION} left-[260px] top-[918px] w-[600px] tracking-[-0.65px]`}>Start at dataset homepage</p>
      <p className={`${CAPTION} left-[1149px] top-[883px] w-[800px] tracking-[-0.9px]`}>{"Locate data variable under Download and\nPlot Data. Hover over and click"}</p>
      <p className={`${CAPTION} left-[2028px] top-[971px] w-[800px] tracking-[-1px]`}>{"Click the catalog icon (blue book).  Any\nyear works since the files are all formatted\nthe same."}</p>
      <p className={`${CAPTION} left-[256px] top-[1928px] w-[1000px] tracking-[-0.94px]`}>{"Copy Data URL and head over to your Jupyter notebook.\n*No need to check any boxes under Variables"}</p>
      <p className={`${CAPTION} left-[2035px] top-[1870px] w-[600px] tracking-[-0.72px]`}>Click blue OpenDAP text</p>

      <svg viewBox="0 0 3312 2058" className="pointer-events-none absolute inset-0 h-[2058px] w-[3312px]">
        <g fill="none" stroke="#000" strokeWidth="8">
          <path d="M1039 409.5Q1170 388 1305 388" />
          <path d="M2142 399.5Q2320 402 2460 420" />
          <path d="M3221 895C3212 1010 3110 1135 2922 1214" />
          <path d="M1667 1665.5Q1440 1668 1258 1628" />
        </g>
        <g fill="#000">
          <path d="M1331.5 387L1301 373V402.500Z" />
          <path d="M2486 426L2459 405L2453 433.500Z" />
          <path d="M2898.500 1227L2917.500 1199L2932.500 1225.500Z" />
          <path d="M1232 1622L1265 1614L1259 1643Z" />
        </g>
      </svg>
    </main>
  );
}
